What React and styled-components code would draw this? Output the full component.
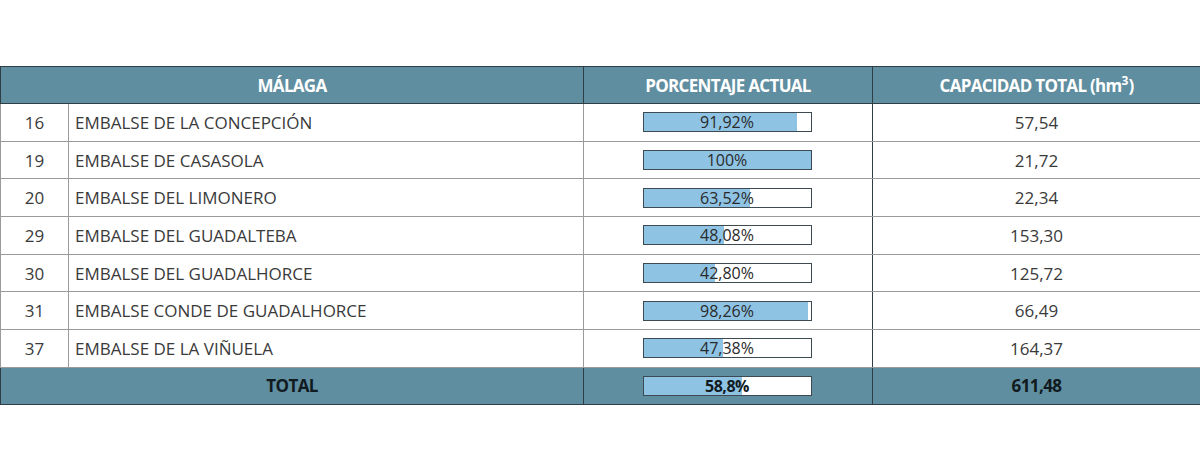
import React from 'react';
import styled, { createGlobalStyle } from 'styled-components';

const GlobalStyle = createGlobalStyle`
  html, body {
    margin: 0;
    padding: 0;
    background: #ffffff;
  }
  body {
    font-family: "Open Sans", "Liberation Sans", sans-serif;
    color: #333333;
  }
`;

const Page = styled.div`
  width: 1200px;
  height: 469px;
  padding-top: 66px;
  box-sizing: border-box;
`;

const Table = styled.table`
  width: 1200px;
  border-collapse: collapse;
  table-layout: fixed;
  border: 1px solid #2f3d44;
`;

const HeadCell = styled.th`
  height: 36px;
  padding: 0;
  background: #5f8ea0;
  color: #ffffff;
  font-size: 17px;
  font-weight: 700;
  letter-spacing: -0.7px;
  text-align: center;
  border: 1px solid #2f3d44;

  sup {
    font-size: 12px;
    line-height: 0;
    letter-spacing: 0;
  }
`;

const Row = styled.tr`
  height: 37.7px;
`;

const Cell = styled.td`
  padding: 0 ${p => (p.$left ? '6px' : '0')};
  font-size: 17px;
  color: #3a3a3a;
  text-align: ${p => (p.$left ? 'left' : 'center')};
  border-top: 1px solid #9a9a9a;
  border-bottom: 1px solid #9a9a9a;
  border-left: 1px solid ${p => (p.$darkLeft ? '#2f3d44' : '#9a9a9a')};
  border-right: 1px solid ${p => (p.$darkLeft ? '#2f3d44' : '#9a9a9a')};
`;

const TotalCell = styled.td`
  height: 36px;
  padding: 0;
  background: #5f8ea0;
  color: #111a1f;
  font-size: 17px;
  font-weight: 700;
  letter-spacing: -0.6px;
  text-align: center;
  border: 1px solid #2f3d44;
`;

const Bar = styled.div`
  position: relative;
  width: 167px;
  height: 18px;
  margin: 0 auto;
  border: 1px solid #3d4a52;
  background: #ffffff;
  overflow: hidden;
  transform: translateX(-1px);
`;

const Fill = styled.div`
  height: 100%;
  background: #8ec3e4;
`;

const BarLabel = styled.span`
  position: absolute;
  inset: 0;
  display: flex;
  align-items: center;
  justify-content: center;
  font-size: 16px;
  font-weight: ${p => (p.$bold ? 700 : 400)};
  color: ${p => (p.$bold ? '#111a1f' : '#2a2a2a')};
  letter-spacing: ${p => (p.$bold ? '-0.5px' : '0')};
`;

const rows = [
  { id: 16, name: 'EMBALSE DE LA CONCEPCIÓN', pct: 91.92, label: '91,92%', cap: '57,54' },
  { id: 19, name: 'EMBALSE DE CASASOLA', pct: 100, label: '100%', cap: '21,72' },
  { id: 20, name: 'EMBALSE DEL LIMONERO', pct: 63.52, label: '63,52%', cap: '22,34' },
  { id: 29, name: 'EMBALSE DEL GUADALTEBA', pct: 48.08, label: '48,08%', cap: '153,30' },
  { id: 30, name: 'EMBALSE DEL GUADALHORCE', pct: 42.8, label: '42,80%', cap: '125,72' },
  { id: 31, name: 'EMBALSE CONDE DE GUADALHORCE', pct: 98.26, label: '98,26%', cap: '66,49' },
  { id: 37, name: 'EMBALSE DE LA VIÑUELA', pct: 47.38, label: '47,38%', cap: '164,37' },
];

const Progress = ({ pct, label, bold }) => (
  <Bar>
    <Fill style={{ width: `${pct}%` }} />
    <BarLabel $bold={bold}>{label}</BarLabel>
  </Bar>
);

export default function App() {
  return (
    <Page>
      <GlobalStyle />
      <Table>
        <colgroup>
          <col style={{ width: 68 }} />
          <col style={{ width: 515 }} />
          <col style={{ width: 289 }} />
          <col style={{ width: 328 }} />
        </colgroup>
        <thead>
          <tr>
            <HeadCell colSpan={2}>MÁLAGA</HeadCell>
            <HeadCell>PORCENTAJE ACTUAL</HeadCell>
            <HeadCell>
              CAPACIDAD TOTAL (hm<sup>3</sup>)
            </HeadCell>
          </tr>
        </thead>
        <tbody>
          {rows.map(r => (
            <Row key={r.id}>
              <Cell>{r.id}</Cell>
              <Cell $left>{r.name}</Cell>
              <Cell $darkLeft>
                <Progress pct={r.pct} label={r.label} />
              </Cell>
              <Cell>{r.cap}</Cell>
            </Row>
          ))}
          <tr>
            <TotalCell colSpan={2}>TOTAL</TotalCell>
            <TotalCell>
              <Progress pct={58.8} label="58,8%" bold />
            </TotalCell>
            <TotalCell>611,48</TotalCell>
          </tr>
        </tbody>
      </Table>
    </Page>
  );
}
